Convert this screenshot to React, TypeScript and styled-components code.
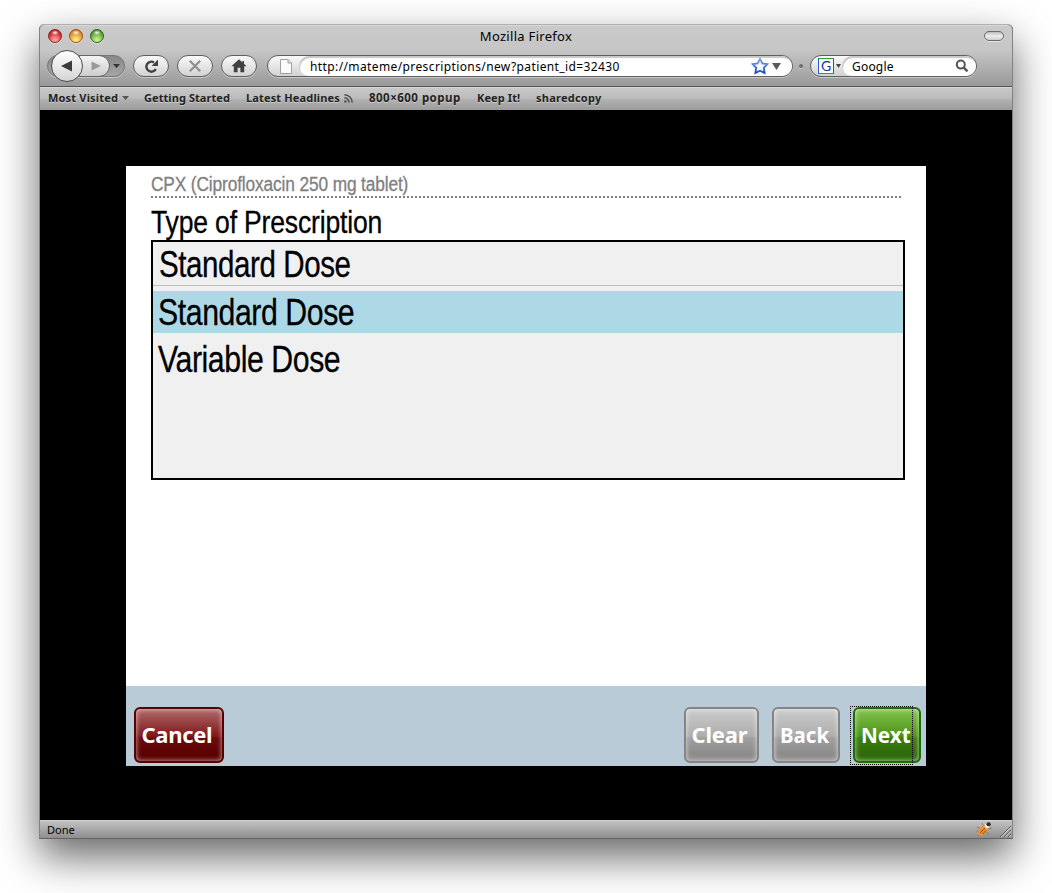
import React from "react";
import styled, { createGlobalStyle, css } from "styled-components";

const GlobalStyle = createGlobalStyle`
  * { box-sizing: border-box; }
  html, body { margin: 0; background: #fff; }
  body { width: 1052px; height: 893px; overflow: hidden; }
`;

const chromeFont = '"Noto Sans", "Open Sans", sans-serif';
const pageFont = '"Liberation Sans", Arial, sans-serif';

const Desktop = styled.div`
  width: 1052px;
  height: 893px;
  padding: 24px 39px 0;
  overflow: hidden;
  background: #fff;
  font-family: ${chromeFont};
  color: #000;
`;

const BrowserWindow = styled.div`
  display: flex;
  flex-direction: column;
  width: 974px;
  height: 815px;
  border: 1px solid #828282;
  border-top-color: #b0b0b0;
  border-bottom-color: #646464;
  border-radius: 5px 5px 0 0;
  background: #000;
  box-shadow: 0 18px 42px rgba(0, 0, 0, 0.6);
`;

const Header = styled.header`
  height: 62px;
  border-top: 1px solid #d8d8d8;
  border-bottom: 1px solid #555;
  border-radius: 4px 4px 0 0;
  background: linear-gradient(#cacaca 0, #c6c6c6 24px, #999 100%);
`;

const TitleBar = styled.div`
  display: grid;
  grid-template-columns: 150px 1fr 150px;
  align-items: center;
  height: 20px;
  padding: 0 8px;
`;

const Lights = styled.div`
  display: flex;
  gap: 7px;
`;

const Light = styled.i<{ $edge: string; $top: string; $bottom: string }>`
  width: 14px;
  height: 14px;
  border-radius: 50%;
  border: 1px solid ${(p) => p.$edge};
  background:
    radial-gradient(ellipse 4px 2.5px at 50% 22%, rgba(255, 255, 255, 0.95), transparent),
    radial-gradient(circle at 50% 85%, ${(p) => p.$bottom} 10%, ${(p) => p.$top} 75%);
  box-shadow: 0 1px 0 rgba(255, 255, 255, 0.4);
`;

const Label = styled.span<{
  $size: number;
  $scale?: number;
  $track?: number;
  $bold?: boolean;
  $width?: number;
  $heavy?: boolean;
}>`
  display: inline-block;
  white-space: pre;
  font-size: ${(p) => p.$size}px;
  font-weight: ${(p) => (p.$bold ? 700 : 400)};
  letter-spacing: ${(p) => p.$track ?? 0}px;
  transform: scaleX(${(p) => p.$scale ?? 1});
  transform-origin: 0 50%;
  ${(p) => p.$width && css`width: ${p.$width}px;`}
  ${(p) => p.$heavy && css`-webkit-text-stroke: 0.3px currentColor;`}
`;

const WindowTitle = styled.div`
  display: flex;
  justify-content: center;
`;

const ToolbarToggle = styled.i`
  justify-self: end;
  width: 20px;
  height: 10px;
  border: 1px solid #6a6a6a;
  border-radius: 5px;
  background: linear-gradient(#bbb, #eee 50%, #ccc);
  box-shadow: 0 1px 0 rgba(255, 255, 255, 0.5);
`;

const Toolbar = styled.div`
  display: flex;
  align-items: center;
  height: 40px;
  padding-left: 7px;
`;

const pill = css`
  border: 1px solid #5f5f5f;
  border-radius: 11px;
  background: linear-gradient(#fafafa, #d2d2d2);
  box-shadow: 0 1px 0 rgba(255, 255, 255, 0.4);
`;

const HistoryGroup = styled.div`
  display: flex;
  align-items: center;
  width: 78px;
  height: 22px;
  margin-right: 8px;
  padding-left: 3px;
  border: 1px solid #777;
  border-radius: 11px;
  background: linear-gradient(#888, #a6a6a6);
  box-shadow: 0 1px 0 rgba(255, 255, 255, 0.4);
`;

const BackButton = styled.div`
  z-index: 1;
  display: flex;
  align-items: center;
  justify-content: center;
  flex: none;
  width: 32px;
  height: 32px;
  border: 1px solid #4d4d4d;
  border-radius: 50%;
  background: linear-gradient(#fff, #d4d4d4);
`;

const ForwardButton = styled.div`
  display: flex;
  align-items: center;
  justify-content: center;
  flex: none;
  width: 31px;
  height: 22px;
  margin-left: -4px;
  padding-left: 3px;
  border: 1px solid #666;
  border-radius: 0 11px 11px 0;
  background: linear-gradient(#f4f4f4, #cdcdcd);
`;

const HistoryArrow = styled.div`
  display: flex;
  padding-left: 3px;
`;

const ToolButton = styled.div`
  ${pill}
  display: flex;
  align-items: center;
  justify-content: center;
  width: 36px;
  height: 22px;
  margin-right: 8px;
`;

const AddressBar = styled.div`
  ${pill}
  display: flex;
  width: 526px;
  height: 22px;
  margin-left: 2px;
`;

const PageIcon = styled.div`
  display: flex;
  align-items: center;
  width: 31px;
  padding-left: 12px;
`;

const Field = styled.div<{ $pad?: number }>`
  display: flex;
  align-items: center;
  flex: 1;
  padding-left: ${(p) => p.$pad ?? 10}px;
  border-radius: 10px;
  background: #fff;
  box-shadow: inset 1px 2px 1px rgba(0, 0, 0, 0.22);
`;

const Splitter = styled.i`
  width: 4px;
  height: 4px;
  margin: 0 7px 0 6px;
  border-radius: 50%;
  background: #6c6c6c;
  box-shadow: 0 1px 0 rgba(255, 255, 255, 0.3);
`;

const SearchBar = styled.div`
  ${pill}
  display: flex;
  width: 167px;
  height: 22px;
`;

const Engine = styled.div`
  display: flex;
  align-items: center;
  width: 31px;
  padding-left: 7px;
  gap: 2px;
`;

const EngineLogo = styled.span`
  display: flex;
  align-items: center;
  justify-content: center;
  width: 16px;
  height: 16px;
  border: 1px solid;
  border-color: #29a329 #c41e1e #29a329 #2858d8;
  background: #fff;
  color: #13339c;
  font: 14px/14px Lato, sans-serif;
`;

const Spacer = styled.div`
  flex: 1;
`;

const Bookmarks = styled.nav`
  display: grid;
  grid-template-columns: 96px 102px 123px 108px 59px 1fr;
  align-items: center;
  height: 23px;
  padding: 0 0 2px 8px;
  border-top: 1px solid #d8d8d8;
  background: linear-gradient(#c8c8c8 0, #bbb 48%, #b2b2b2 50%, #9c9c9c 100%);
  color: #222;
`;

const Bookmark = styled.div`
  display: flex;
  align-items: center;
  line-height: 20px;
  text-shadow: 0 1px 0 rgba(255, 255, 255, 0.4);
`;

const Viewport = styled.main`
  flex: 1;
  padding: 56px 86px 0;
  background: #000;
`;

const Page = styled.section`
  display: flex;
  flex-direction: column;
  width: 800px;
  height: 600px;
  background: #fff;
  font-family: ${pageFont};
`;

const Form = styled.div`
  flex: 1;
  padding: 7px 21px 0 25px;
`;

const DrugName = styled.div`
  width: 750px;
  height: 25px;
  border-bottom: 2px dotted #808080;
  color: #808080;
  line-height: 23px;
`;

const Question = styled.div`
  height: 42px;
  line-height: 48px;
`;

const Picker = styled.div`
  width: 754px;
  height: 240px;
  border: 2px solid #000;
  background: #f0f0f0;
`;

const Answer = styled.div`
  height: 44px;
  margin-bottom: 5px;
  padding-left: 6px;
  border-bottom: 1px solid #bdbdbd;
  line-height: 45px;
`;

const Option = styled.div<{ $selected?: boolean }>`
  height: 42px;
  margin-bottom: 5px;
  padding-left: 5px;
  line-height: 43px;
  background: ${(p) => (p.$selected ? "#add8e6" : "transparent")};
`;

const ButtonBar = styled.footer`
  display: flex;
  align-items: flex-start;
  height: 80px;
  padding: 21px 5px 0 8px;
  background: #b9cbd7;
  font-family: ${chromeFont};
`;

const tones = {
  red: ["#5a0002", "#b06a6b", "#80181a", "#6c0a0c", "#5c0203"],
  grey: ["#858585", "#cccccc", "#adadad", "#9f9f9f", "#8d8d8d"],
  green: ["#1f6d05", "#84c450", "#4c9314", "#3a7f0d", "#2f6b0a"],
};

const GlossButton = styled.button<{ $tone: keyof typeof tones; $w: number; $gap?: number }>`
  position: relative;
  display: flex;
  align-items: center;
  width: ${(p) => p.$w}px;
  height: 56px;
  margin: 0 ${(p) => p.$gap ?? 0}px 0 0;
  padding: 0 0 2px 5.5px;
  border: 2px solid ${(p) => tones[p.$tone][0]};
  border-radius: 6px;
  background: ${(p) => {
    const [, a, b, c, d] = tones[p.$tone];
    return `linear-gradient(${a}, ${b} 52%, ${c} 56%, ${d} 85%, ${d})`;
  }};
  box-shadow: inset 0 0 5px rgba(255, 255, 255, 0.7);
  color: #fff;
  font-family: ${chromeFont};
`;

const FocusRing = styled.i`
  position: absolute;
  left: -5px;
  top: -3px;
  width: 63px;
  height: 59px;
  border: 1px dotted #000;
`;

const StatusBar = styled.footer`
  display: flex;
  align-items: center;
  height: 18px;
  padding-left: 7px;
  border-top: 1px solid #d2d2d2;
  background: linear-gradient(#c2c2c2, #8e8e8e);
`;

const Down = ({ w = 8, h = 5, fill = "#444" }) => (
  <svg width={w} height={h} viewBox="0 0 8 5" preserveAspectRatio="none">
    <path d="M0 0H8L4 5Z" fill={fill} />
  </svg>
);

export default function App() {
  return (
    <>
      <GlobalStyle />
      <Desktop>
        <BrowserWindow>
          <Header>
            <TitleBar>
              <Lights>
                <Light $edge="#8c2322" $top="#c4161c" $bottom="#ff9d9d" />
                <Light $edge="#96501c" $top="#dd7a20" $bottom="#ffe978" />
                <Light $edge="#33601c" $top="#4a9426" $bottom="#c2ee8c" />
              </Lights>
              <WindowTitle>
                <Label $size={13} $track={0.3}>Mozilla Firefox</Label>
              </WindowTitle>
              <ToolbarToggle />
            </TitleBar>
            <Toolbar>
              <HistoryGroup>
                <BackButton>
                  <svg width="12" height="12" viewBox="0 0 12 12">
                    <path d="M0 6L11 0.5V11.5Z" fill="#3c3c3c" />
                  </svg>
                </BackButton>
                <ForwardButton>
                  <svg width="10" height="10" viewBox="0 0 10 10">
                    <path d="M10 5L0.5 0.5V9.5Z" fill="#9a9a9a" />
                  </svg>
                </ForwardButton>
                <HistoryArrow>
                  <Down w={7} h={4} fill="#333" />
                </HistoryArrow>
              </HistoryGroup>
              <ToolButton>
                <svg width="15" height="15" viewBox="0 0 15 15">
                  <path d="M10 3.4A5 5 0 1 0 11.8 10" fill="none" stroke="#404040" strokeWidth="2.4" />
                  <path d="M14 0.6V7H7.6Z" fill="#404040" />
                </svg>
              </ToolButton>
              <ToolButton>
                <svg width="12" height="12" viewBox="0 0 12 12">
                  <path d="M0.8 0.8L11.2 11.2M11.2 0.8L0.8 11.2" stroke="#8e8e8e" strokeWidth="2.2" />
                </svg>
              </ToolButton>
              <ToolButton>
                <svg width="16" height="14" viewBox="0 0 16 14">
                  <path d="M8 0.3L15.6 7.3H13.2V13.3H9.4V8.8H6.6V13.3H2.8V7.3H0.4Z" fill="#404040" />
                  <path d="M11.4 2H13V6H11.4Z" fill="#404040" />
                </svg>
              </ToolButton>
              <AddressBar>
                <PageIcon>
                  <svg width="12" height="15" viewBox="0 0 12 15">
                    <path d="M0.5 0.5H8L11.5 4V14.5H0.5Z" fill="#fafafa" stroke="#a0a0a0" />
                    <path d="M8 0.5V4H11.5" fill="#ddd" stroke="#a0a0a0" />
                  </svg>
                </PageIcon>
                <Field $pad={11}>
                  <Label $size={12} $track={0.39}>http://mateme/prescriptions/new?patient_id=32430</Label>
                  <Spacer />
                  <svg width="41" height="18" viewBox="0 0 41 18">
                    <defs>
                      <linearGradient id="starEdge" x1="0" y1="0" x2="0" y2="1">
                        <stop offset="0" stopColor="#7aa6dc" />
                        <stop offset="1" stopColor="#1746c8" />
                      </linearGradient>
                    </defs>
                    <path
                      d="M9 1.8L11.4 6.4L16.3 7.2L12.8 10.8L13.6 16L9 13.7L4.4 16L5.2 10.8L1.7 7.2L6.6 6.4Z"
                      fill="#f4f8ff"
                      stroke="url(#starEdge)"
                      strokeWidth="1.8"
                    />
                    <path d="M21 6H30L25.5 13Z" fill="#5a5a5a" />
                  </svg>
                </Field>
              </AddressBar>
              <Splitter />
              <SearchBar>
                <Engine>
                  <EngineLogo>G</EngineLogo>
                  <Down w={5} h={4} />
                </Engine>
                <Field>
                  <Label $size={12} $track={0.2}>Google</Label>
                  <Spacer />
                  <svg width="21" height="14" viewBox="0 0 21 14">
                    <circle cx="5.8" cy="5.6" r="4" fill="none" stroke="#555" strokeWidth="2" />
                    <path d="M8.8 8.6L12.5 12.3" stroke="#555" strokeWidth="2.4" />
                  </svg>
                </Field>
              </SearchBar>
            </Toolbar>
          </Header>
          <Bookmarks>
            <Bookmark>
              <Label $size={11} $bold $width={74} $track={0.18}>Most Visited</Label>
              <Down w={7} h={4} fill="#555" />
            </Bookmark>
            <Bookmark>
              <Label $size={11} $bold $track={0.07}>Getting Started</Label>
            </Bookmark>
            <Bookmark>
              <Label $size={11} $bold $width={98} $track={0.15}>Latest Headlines</Label>
              <svg width="9" height="9" viewBox="0 0 9 9" fill="none" stroke="#4a4a4a" strokeWidth="1.5">
                <circle cx="1.4" cy="7.6" r="0.5" />
                <path d="M0.4 3.8A4.6 4.6 0 0 1 5 8.6M0.4 0.8A7.8 7.8 0 0 1 8.2 8.6" />
              </svg>
            </Bookmark>
            <Bookmark>
              <Label $size={11.5} $bold $track={0.48}>800×600 popup</Label>
            </Bookmark>
            <Bookmark>
              <Label $size={11} $bold $track={0.1}>Keep It!</Label>
            </Bookmark>
            <Bookmark>
              <Label $size={11} $bold $track={0.24}>sharedcopy</Label>
            </Bookmark>
          </Bookmarks>
          <Viewport>
            <Page>
              <Form>
                <DrugName>
                  <Label $size={20} $scale={0.865} $track={-0.15} $heavy>CPX (Ciprofloxacin 250 mg tablet)</Label>
                </DrugName>
                <Question>
                  <Label $size={32} $scale={0.83} $track={-0.22} $heavy>Type of Prescription</Label>
                </Question>
                <Picker>
                  <Answer>
                    <Label $size={36} $scale={0.82} $track={-0.5} $heavy>Standard Dose</Label>
                  </Answer>
                  <Option $selected>
                    <Label $size={36} $scale={0.84} $track={-0.5} $heavy>Standard Dose</Label>
                  </Option>
                  <Option>
                    <Label $size={36} $scale={0.84} $track={-0.5} $heavy>Variable Dose</Label>
                  </Option>
                </Picker>
              </Form>
              <ButtonBar>
                <GlossButton $tone="red" $w={90}>
                  <Label $size={22} $bold $track={-0.3}>Cancel</Label>
                </GlossButton>
                <Spacer />
                <GlossButton $tone="grey" $w={75} $gap={13}>
                  <Label $size={22} $bold $track={-0.2}>Clear</Label>
                </GlossButton>
                <GlossButton $tone="grey" $w={68} $gap={13}>
                  <Label $size={22} $bold $scale={0.93}>Back</Label>
                </GlossButton>
                <GlossButton $tone="green" $w={68}>
                  <Label $size={22} $bold $scale={0.94}>Next</Label>
                  <FocusRing />
                </GlossButton>
              </ButtonBar>
            </Page>
          </Viewport>
          <StatusBar>
            <Label $size={11}>Done</Label>
            <Spacer />
            <svg width="37" height="17" viewBox="0 0 37 17">
              <path
                d="M2 6L7 8M1.5 10L6 10M3 15L6 12M7 2L9 6M17 7L12 8M14 13L10 10"
                stroke="#8b7355"
                strokeWidth="0.8"
              />
              <ellipse cx="8" cy="9.2" rx="3.8" ry="6.2" transform="rotate(42 8 9.2)" fill="#ee8e34" />
              <path d="M5 12L10 7M7.5 13L11 9.5" stroke="#8a4a14" />
              <circle cx="12" cy="5" r="2.4" fill="#f4ece4" />
              <ellipse cx="13.6" cy="3.2" rx="2.2" ry="2" fill="#2c2c2c" />
              <path d="M25 16L36 5M29 16L36 9M33 16L36 13" stroke="#5c5c5c" />
              <path d="M26.2 16L36 6.2M30.2 16L36 10.2M34.2 16L36 14.2" stroke="#d8d8d8" />
            </svg>
          </StatusBar>
        </BrowserWindow>
      </Desktop>
    </>
  );
}
